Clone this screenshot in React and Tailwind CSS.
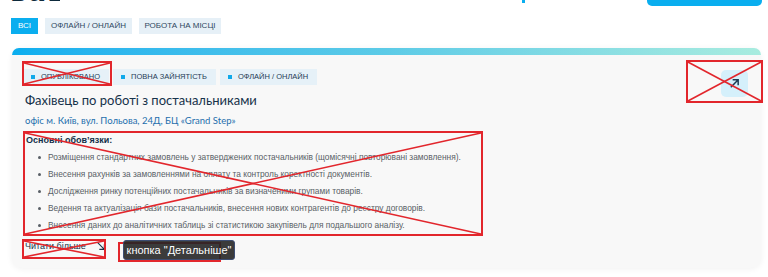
import React from "react";

const duties = [
  "Розміщення стандартних замовлень у затверджених постачальників (щомісячні повторювані замовлення).",
  "Внесення рахунків за замовленнями на оплату та контроль коректності документів.",
  "Дослідження ринку потенційних постачальників за визначеними групами товарів.",
  "Ведення та актуалізація бази постачальників, внесення нових контрагентів до реєстру договорів.",
  "Внесення даних до аналітичних таблиць зі статистикою закупівель для подальшого аналізу.",
];

function CrossBox({ className, cross = true }) {
  // red annotation rectangle laid over the screenshot
  return (
    <div className={"pointer-events-none absolute border-2 border-[#e2262c] " + className}>
      {cross && (
        <svg className="absolute inset-0 h-full w-full" preserveAspectRatio="none" viewBox="0 0 100 100">
          <line x1="0" y1="0" x2="100" y2="100" stroke="#e2262c" strokeWidth="1.6" vectorEffect="non-scaling-stroke" />
          <line x1="100" y1="0" x2="0" y2="100" stroke="#e2262c" strokeWidth="1.6" vectorEffect="non-scaling-stroke" />
        </svg>
      )}
    </div>
  );
}

function Tag({ children }) {
  return (
    <span className="flex h-[16px] items-center gap-[6px] bg-[#e6f1f8] pl-[8px] pr-[9px] text-[7.5px] uppercase text-[#1f3b55]">
      <span className="h-[4px] w-[4px] bg-[#10a9ea]" />
      {children}
    </span>
  );
}

export default function App() {
  return (
    <div className="relative h-[277px] w-[768px] overflow-hidden bg-white font-['Liberation_Sans',sans-serif]">
      {/* header leftovers, scrolled mostly out of view */}
      <div className="flex h-[7px] items-start pr-[6px]">
        <div className="h-[7px] w-[60px] overflow-hidden [clip-path:inset(0)]">
          <div className="-mt-[24px] pl-[10px] text-[30px] font-bold leading-[30px] tracking-[1px] text-[#0d2a3c] font-['DejaVu_Sans_Condensed',sans-serif]">
            ваш
          </div>
        </div>
        <span className="ml-auto h-[3px] w-[3px] bg-[#0aaeef]" />
        <div className="-mt-[34px] ml-[122px] h-[40px] w-[115px] rounded-[5px] bg-[#0aaeef]" />
      </div>

      {/* filters */}
      <div className="mt-[11px] flex gap-[7px] pl-[11px]">
        <button className="h-[16px] w-[27px] bg-[#0aaeef] text-[8px] text-white">ВСІ</button>
        <button className="h-[16px] w-[87px] bg-[#e6f0f7] text-[8px] text-[#2f4760]">ОФЛАЙН / ОНЛАЙН</button>
        <button className="h-[16px] w-[82px] bg-[#e6f0f7] text-[8px] text-[#2f4760]">РОБОТА НА МІСЦІ</button>
      </div>

      {/* vacancy card */}
      <div className="ml-[12px] mt-[14px] h-[220px] w-[749px] rounded-[10px] bg-[#f8f8f8] shadow-[0_1px_6px_rgba(0,0,0,0.06)]">
        <div className="h-[7px] rounded-t-[10px] bg-gradient-to-r from-[#0aaeef] via-[#5ccbe7] to-[#a8ecdf]" />
        <div className="flex justify-between pl-[11px] pr-[13px] pt-[14px]">
          <div className="flex gap-[4px]">
            <Tag>Опубліковано</Tag>
            <Tag>Повна зайнятість</Tag>
            <Tag>Офлайн / онлайн</Tag>
          </div>
          <button className="mt-[1px] flex h-[27px] w-[27px] items-center justify-center rounded-[5px] bg-[#d5f0fb] text-[#1b3a52]">
            <svg width="11" height="11" viewBox="0 0 12 12" fill="none" stroke="currentColor" strokeWidth="1.6">
              <path d="M2 10 L10 2 M4 2 H10 V8" />
            </svg>
          </button>
        </div>

        <div className="pl-[13px]">
          <h2 className="-mt-[5px] text-[13px] leading-[16px] text-[#16324a] font-['Lato',sans-serif]">
            Фахівець по роботі з постачальниками
          </h2>
          <p className="mt-[7px] text-[9.5px] leading-[12px] text-[#1f6fad] font-['Lato',sans-serif]">
            офіс м. Київ, вул. Польова, 24Д, БЦ «Grand Step»
          </p>

          <div className="mt-[4px] w-[458px] pl-[1px] pt-[3px]">
            <div className="text-[9px] font-bold leading-[12px] text-[#14304a]">Основні обов’язки:</div>
            <ul className="mt-[5px] flex flex-col gap-[5px] pl-[12px]">
              {duties.map((d) => (
                <li key={d} className="flex h-[12px] items-center gap-[7px] whitespace-nowrap text-[8.35px] leading-[12px] text-[#595f66]">
                  <span className="h-[3px] w-[3px] shrink-0 rounded-full bg-[#595f66]" />
                  {d}
                </li>
              ))}
            </ul>
          </div>

          <div className="mt-[9px] flex items-center gap-[10px]">
            <a className="flex items-center gap-[10px] text-[9px] leading-[12px] text-[#16324a]">
              Читати більше
              <svg width="10" height="10" viewBox="0 0 12 12" fill="none" stroke="currentColor" strokeWidth="1.3">
                <path d="M2 2 L10 10 M10 4 V10 H4" />
              </svg>
            </a>
          </div>
        </div>
      </div>

      {/* annotation overlays */}
      <CrossBox className="left-[22px] top-[61px] h-[25px] w-[90px]" />
      <CrossBox className="left-[686px] top-[60px] h-[43px] w-[77px]" />
      <CrossBox className="left-[23px] top-[131px] h-[105px] w-[460px]" />
      <CrossBox className="left-[22px] top-[239px] h-[20px] w-[84px]" />
      <CrossBox className="left-[118px] top-[242px] h-[20px] w-[103px]" cross={false} />
      <div className="absolute left-[123px] top-[240px] flex h-[20px] w-[112px] items-center justify-center whitespace-nowrap rounded-[3px] border border-[#3c4d72] bg-[#262626]/90 text-[11px] text-white">
        кнопка "Детальніше"
      </div>
    </div>
  );
}
